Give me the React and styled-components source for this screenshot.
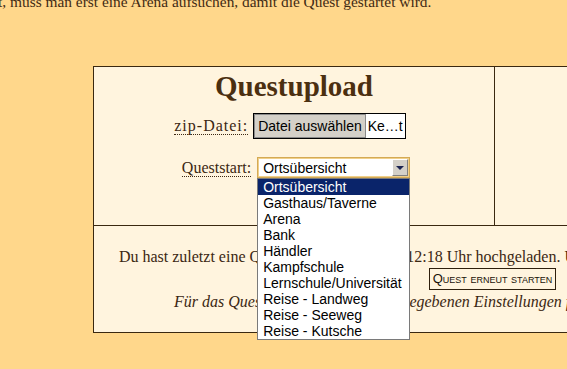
import React from 'react';
import styled, { createGlobalStyle } from 'styled-components';

const GlobalStyle = createGlobalStyle`
  html, body {
    margin: 0;
    padding: 0;
    overflow: hidden;
    background: #ffd78b;
  }
  body {
    font-family: "Liberation Serif", "Times New Roman", serif;
    color: #3b2712;
  }
`;

const Page = styled.div`
  width: 567px;
  height: 369px;
  overflow: hidden;
`;

const Intro = styled.p`
  margin: -7px 0 0 -2px;
  font-size: 15.4px;
  line-height: 18px;
  white-space: nowrap;
  color: #3f2a14;
`;

const Table = styled.div`
  display: grid;
  grid-template-columns: 400px 397px;
  grid-template-rows: 158px 107px;
  width: max-content;
  margin: 55px 0 0 93px;
  border: 1px solid #3a2810;
  background: #fff4de;
  font-size: 16px;
`;

const FormCell = styled.div`
  display: flex;
  flex-direction: column;
  align-items: center;
  padding-top: 3px;
`;

const EmptyCell = styled.div`
  border-left: 1px solid #3a2810;
`;

const InfoCell = styled.div`
  grid-column: 1 / -1;
  border-top: 1px solid #3a2810;
  padding-top: 21px;
  text-align: center;
  line-height: 20px;
  white-space: nowrap;
`;

const Heading = styled.h1`
  margin: 0;
  font-size: 29px;
  line-height: 32px;
  font-weight: bold;
  color: #4b2f10;
`;

const FormRow = styled.div`
  display: flex;
  align-items: center;
  gap: ${(props) => props.gap || 5}px;
  margin-top: ${(props) => props.top}px;
  margin-left: ${(props) => props.shift || 0}px;
`;

const Label = styled.span`
  line-height: 17px;
  letter-spacing: ${(props) => props.spread || 0}px;
  border-bottom: 1px dotted #3b2712;
`;

const FileInput = styled.div`
  display: flex;
  height: 24px;
  border: 1px solid #000;
  font-family: "Liberation Sans", Arial, sans-serif;
  font-size: 14px;
  color: #000;
`;

const FileButton = styled.div`
  display: flex;
  align-items: center;
  padding: 0 3px;
  background: #d4d0c8;
  border: 1px solid #8a8a8a;
`;

const FileName = styled.div`
  display: flex;
  align-items: center;
  padding: 0 2px 0 2px;
  background: #fff;
`;

const Select = styled.div`
  position: relative;
  box-sizing: border-box;
  width: 153px;
  height: 21px;
  display: flex;
  align-items: center;
  padding-left: 5px;
  border: 1px solid #d4aa55;
  box-shadow: inset 0 0 0 1px #f0cf8a;
  background: #fff;
  font-family: "Liberation Sans", Arial, sans-serif;
  font-size: 14px;
  color: #000;
`;

const Arrow = styled.div`
  position: absolute;
  right: 1px;
  top: 1px;
  bottom: 1px;
  width: 16px;
  box-sizing: border-box;
  display: flex;
  align-items: center;
  justify-content: center;
  background: #d4d0c8;
  border: 1px solid;
  border-color: #fff #808080 #808080 #fff;

  &::after {
    content: '';
    border-left: 4px solid transparent;
    border-right: 4px solid transparent;
    border-top: 4px solid #1b2350;
    margin-top: 1px;
  }
`;

const Options = styled.ul`
  position: absolute;
  top: 20px;
  left: -1px;
  width: 153px;
  box-sizing: border-box;
  margin: 0;
  padding: 0;
  list-style: none;
  background: #fff;
  border: 1px solid #7a7a7a;
  z-index: 5;
`;

const Option = styled.li`
  height: 16px;
  line-height: 16px;
  padding-left: 5px;
  white-space: nowrap;
  background: ${(props) => (props.selected ? '#0a246a' : 'transparent')};
  color: ${(props) => (props.selected ? '#fff' : '#000')};
`;

const RestartButton = styled.div`
  display: inline-block;
  margin-top: 1px;
  padding: 0 3px;
  height: 20px;
  line-height: 20px;
  border: 1px solid #2e1f0c;
  font-family: "Liberation Sans", Arial, sans-serif;
  font-size: 13px;
  font-variant: small-caps;
  color: #1a1208;
`;

const Note = styled.div`
  font-style: italic;
  line-height: 24px;
`;

const places = [
  'Ortsübersicht',
  'Gasthaus/Taverne',
  'Arena',
  'Bank',
  'Händler',
  'Kampfschule',
  'Lernschule/Universität',
  'Reise - Landweg',
  'Reise - Seeweg',
  'Reise - Kutsche',
];

export default function App() {
  return (
    <Page>
      <GlobalStyle />
      <Intro>t, muss man erst eine Arena aufsuchen, damit die Quest gestartet wird.</Intro>
      <Table>
        <FormCell>
          <Heading>Questupload</Heading>
          <FormRow top={11} shift={-8}>
            <Label spread={1}>zip-Datei:</Label>
            <FileInput>
              <FileButton>Datei auswählen</FileButton>
              <FileName>Ke…t</FileName>
            </FileInput>
          </FormRow>
          <FormRow top={18} gap={6} shift={4}>
            <Label>Queststart:</Label>
            <Select>
              Ortsübersicht
              <Arrow />
              <Options>
                {places.map((p, i) => (
                  <Option key={p} selected={i === 0}>{p}</Option>
                ))}
              </Options>
            </Select>
          </FormRow>
        </FormCell>
        <EmptyCell />
        <InfoCell>
          <div>
            Du hast zuletzt eine Quest am 15.3.2011 um 12:18 Uhr hochgeladen. Um die Quest neu zu starten, klicke hier unten:
          </div>
          <RestartButton>Quest erneut starten</RestartButton>
          <Note>
            Für das Questtesten werden alle angegebenen Einstellungen für jeden neuen Testlauf übernommen.
          </Note>
        </InfoCell>
      </Table>
    </Page>
  );
}
